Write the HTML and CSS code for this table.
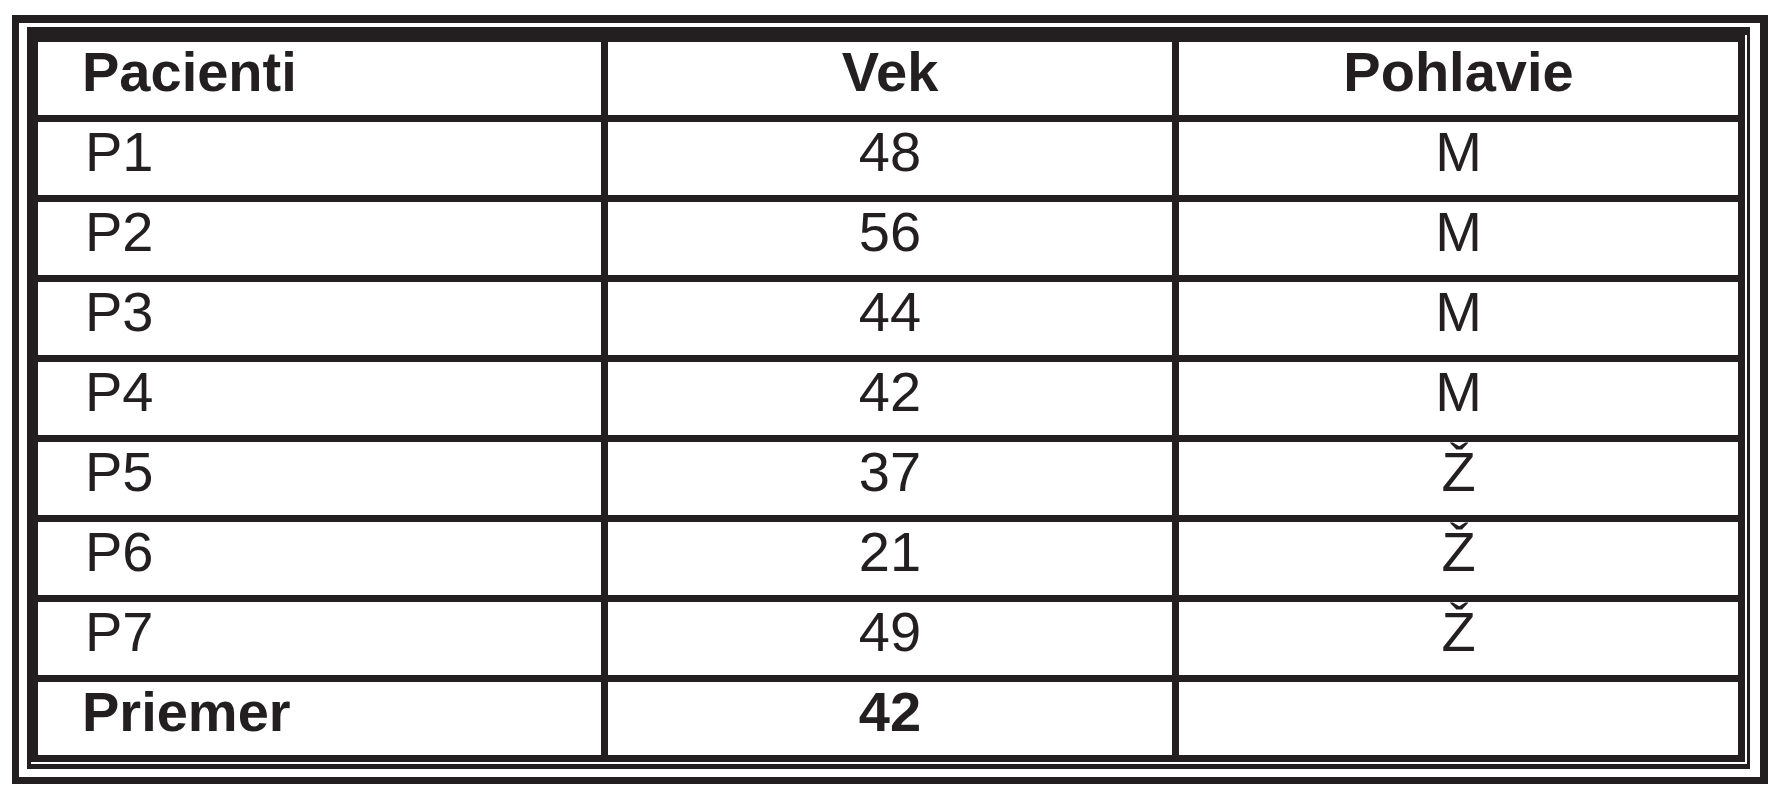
FILE: index.html
```html
<!DOCTYPE html>
<html lang="sk">
<head>
<meta charset="utf-8">
<title>Pacienti</title>
<link rel="stylesheet" href="styles.css">
</head>
<body>
<div class="frame">
  <div class="inner">
    <table class="grid">
      <colgroup>
        <col class="c1"><col class="c2"><col class="c3">
      </colgroup>
      <thead>
        <tr><th class="first">Pacienti</th><th>Vek</th><th>Pohlavie</th></tr>
      </thead>
      <tbody>
        <tr><td class="first">P1</td><td>48</td><td>M</td></tr>
        <tr><td class="first">P2</td><td>56</td><td>M</td></tr>
        <tr><td class="first">P3</td><td>44</td><td>M</td></tr>
        <tr><td class="first">P4</td><td>42</td><td>M</td></tr>
        <tr><td class="first">P5</td><td>37</td><td>Ž</td></tr>
        <tr><td class="first">P6</td><td>21</td><td>Ž</td></tr>
        <tr><td class="first">P7</td><td>49</td><td>Ž</td></tr>
        <tr class="total"><td class="first">Priemer</td><td>42</td><td></td></tr>
      </tbody>
    </table>
  </div>
</div>
</body>
</html>
```

FILE: styles.css
```css
html, body {
  margin: 0;
  padding: 0;
  background: #ffffff;
}

body {
  font-family: "Liberation Sans", Arial, sans-serif;
  color: #231f20;
}

.frame {
  display: inline-block;
  margin: 15px 0 0 12px;
  border-style: solid;
  border-color: #231f20;
  border-width: 8px 8px 7px 7px;
  padding: 4px 10px 8px 8px;
}

.inner {
  border-style: solid;
  border-color: #231f20;
  border-width: 8px 3px 5px 4px;
  padding: 0 2px 2px 0;
  background: #ffffff;
}

.grid {
  display: table;
  border-collapse: separate;
  border-spacing: 7px;
  background: #231f20;
  table-layout: fixed;
  width: 1714px;
}

.c1 { width: 563px; }
.c2 { width: 564px; }
.c3 { width: 559px; }

.grid th,
.grid td {
  background: #ffffff;
  height: 73px;
  box-sizing: border-box;
  padding: 2px 0 0 0;
  vertical-align: top;
  text-align: center;
  font-size: 56px;
  line-height: 56px;
  font-weight: 400;
  white-space: nowrap;
}

.grid th {
  font-weight: 700;
}

.grid .first {
  text-align: left;
  padding-left: 47px;
}

.grid th.first,
.total .first {
  padding-left: 44px;
}

.total td {
  font-weight: 700;
}
```
